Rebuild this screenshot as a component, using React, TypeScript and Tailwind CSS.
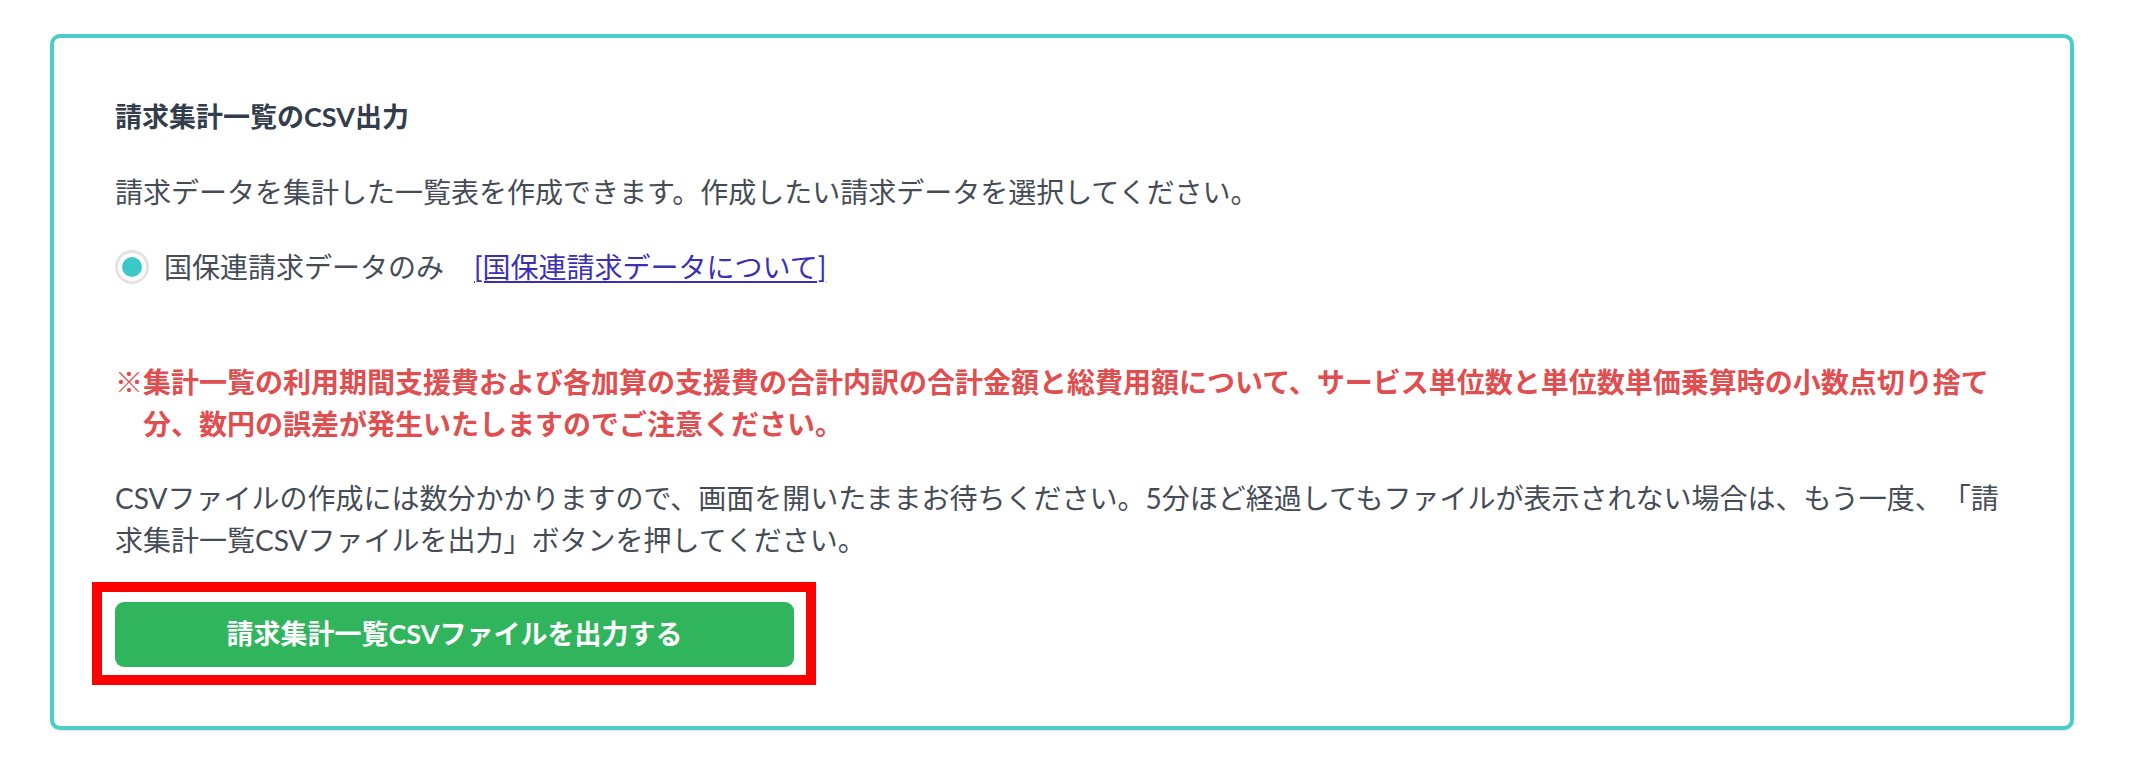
import React from "react";

export default function App() {
  const font = { fontFamily: 'Lato, "Noto Sans CJK JP", sans-serif' };
  return (
    <div className="w-[2130px] h-[766px] bg-white overflow-hidden [text-spacing-trim:space-all]" style={font}>
      <div className="ml-[50px] mt-[34px] w-[2024px] rounded-[10px] border-[4px] border-[#4ccdc9] bg-white pl-[61px] pr-[60px] pt-[58px] pb-[59px] shadow-[0_1px_2px_rgba(0,0,0,0.12)]">
        <h2 className="text-[27px] leading-[42px] font-bold text-[#333d4b]">
          請求集計一覧のCSV出力
        </h2>
        <p className="mt-[33px] text-[28px] leading-[42px] text-[#454c56]">
          請求データを集計した一覧表を作成できます。作成したい請求データを選択してください。
        </p>
        <div className="mt-[33px] flex h-[42px] items-center">
          <span className="flex h-[34px] w-[34px] items-center justify-center rounded-full border-[3px] border-[#e3e3e3] bg-white">
            <span className="h-[20px] w-[20px] rounded-full bg-[#3cc8c8]" />
          </span>
          <span className="ml-[15px] text-[28px] leading-[42px] text-[#454c56]">
            国保連請求データのみ
          </span>
          <a
            href="#"
            className="ml-[30px] text-[28px] leading-[42px] text-[#3a30b4] underline underline-offset-[3px] decoration-[2px]"
          >
            [国保連請求データについて]
          </a>
        </div>
        <p className="mt-[73px] pl-[28px] -indent-[28px] text-[28px] leading-[42px] font-bold text-[#e04e50]">
          ※集計一覧の利用期間支援費および各加算の支援費の合計内訳の合計金額と総費用額について、サービス単位数と単位数単価乗算時の小数点切り捨て分、数円の誤差が発生いたしますのでご注意ください。
        </p>
        <p className="mt-[32px] text-[28px] leading-[42px] text-[#454c56]">
          CSVファイルの作成には数分かかりますので、画面を開いたままお待ちください。5分ほど経過してもファイルが表示されない場合は、もう一度、「請求集計一覧CSVファイルを出力」ボタンを押してください。
        </p>
        <div className="relative mt-[41px] w-[679px]">
          <button className="flex h-[65px] w-[679px] items-center justify-center rounded-[9px] bg-[#30b55d] text-[27px] font-bold text-white">
            請求集計一覧CSVファイルを出力する
          </button>
          <div className="pointer-events-none absolute left-[-23px] top-[-20px] right-[-22px] bottom-[-18px] border-[10px] border-[#ff0000]" />
        </div>
      </div>
    </div>
  );
}
